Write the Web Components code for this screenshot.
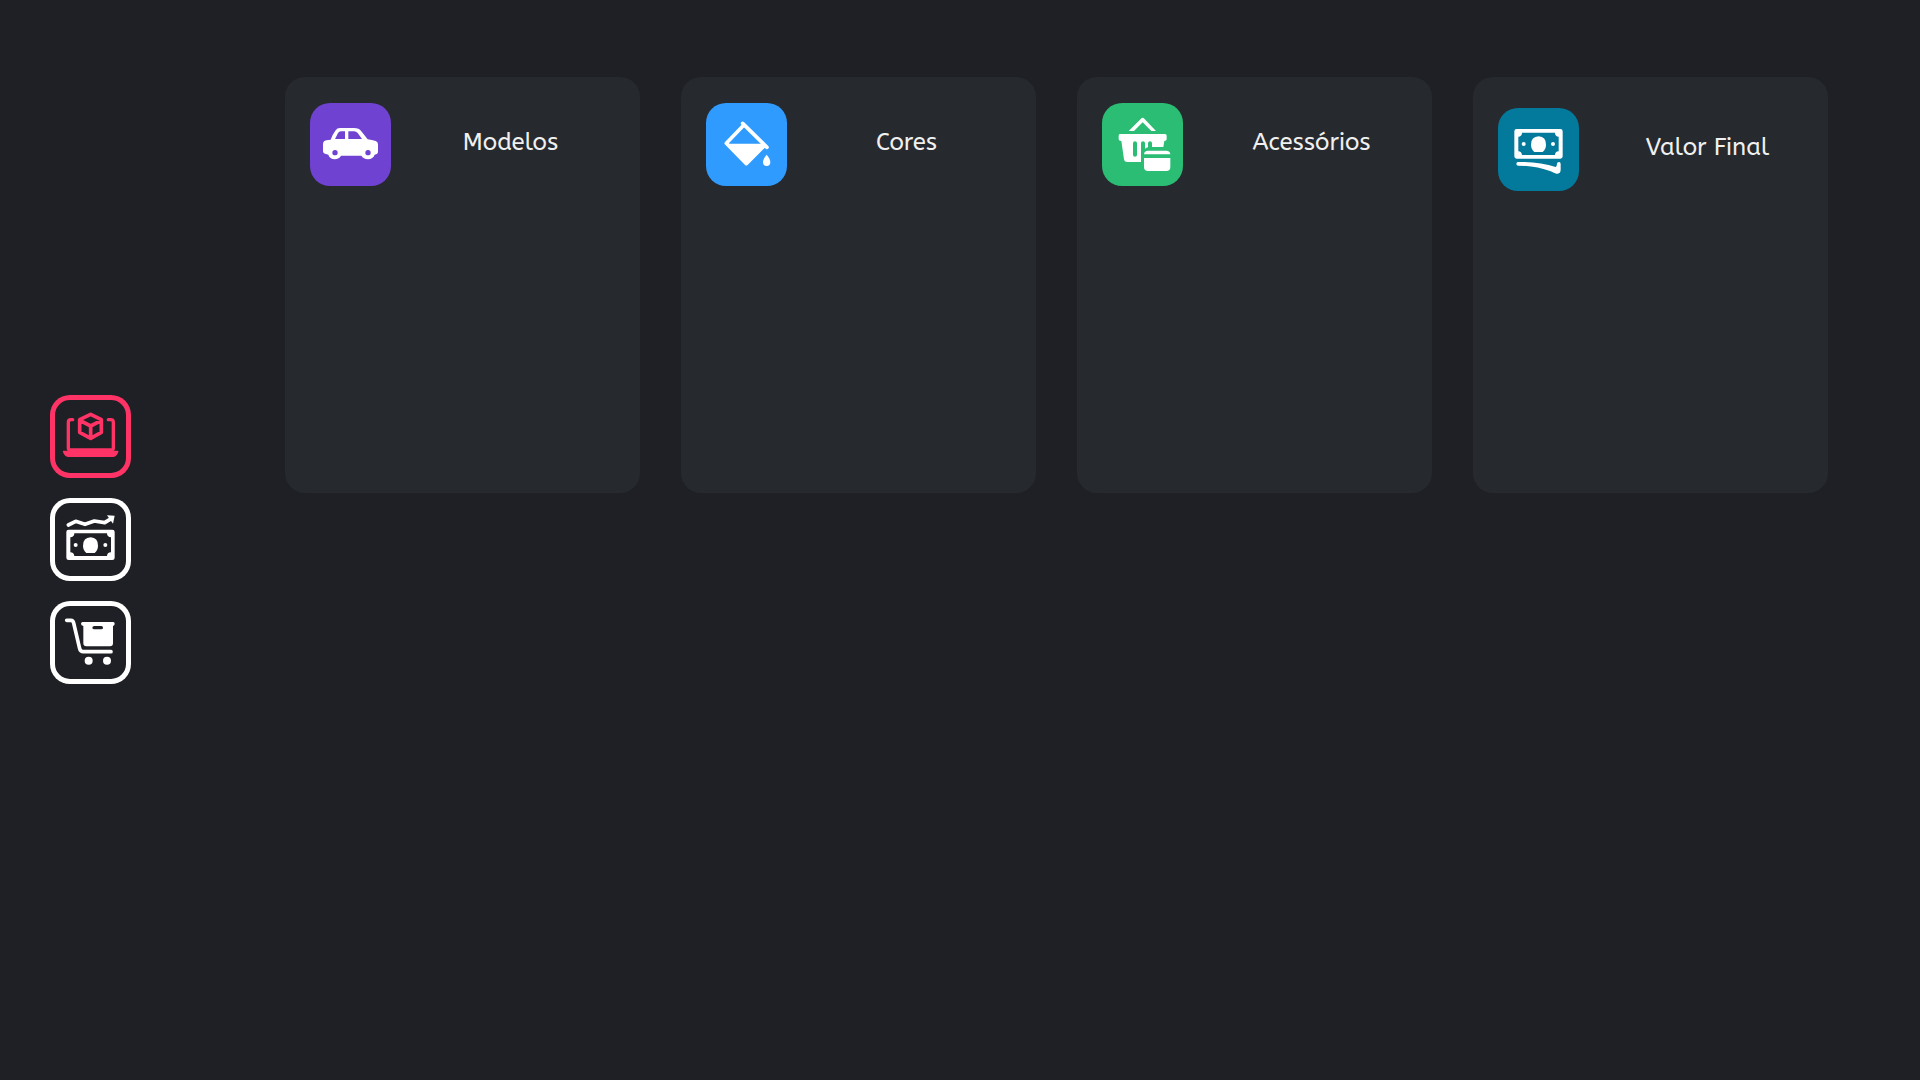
<!DOCTYPE html>
<html lang="pt-BR">
<head>
<meta charset="utf-8">
<title>Concessionária</title>
<style>
  html, body { margin: 0; }
  body {
    min-height: 100vh;
    background: #1f2025;
    color: #f0f0f0;
    font-family: "ABeeZee", "Open Sans", "Noto Sans", sans-serif;
  }
</style>
</head>
<body>
<app-shell>
  <side-nav slot="nav">
    <nav-button label="Modelos 3D" active>
      <svg viewBox="30 30 243 249">
        <g fill="none" stroke="currentColor" stroke-width="10" stroke-linecap="round" stroke-linejoin="round">
          <path d="M98 104h-5q-8 0-8 8v78q0 5 6 5h122q7 0 7-5v-78q0-8-8-8h-7" />
          <path stroke-width="11" d="M152 88l32 16v38l-32 18-33-18v-38zM121 107l31 16 31-16M152 123v36" />
        </g>
        <path fill="currentColor" d="M71 197h161q5 0 3 4-5 15-17 15H86q-12 0-17-15-2-4 2-4z" />
      </svg>
    </nav-button>
    <nav-button label="Vendas">
      <svg viewBox="30 24 243 249">
        <path fill="none" stroke="currentColor" stroke-width="11" stroke-linecap="round" stroke-linejoin="round" d="M85 105l22-11 28 9 28-10 31 5 16-10" />
        <path fill="currentColor" d="M201 76l23 1-5 24z" />
        <path fill="currentColor" fill-rule="evenodd" d="M86 119h131q7 0 7 7v77q0 7-7 7H86q-7 0-7-7v-77q0-7 7-7zm17 11q0 11-12 12v45q11 1 12 11h98q0-10 12-11v-45q-12-1-12-12z" />
        <path fill="currentColor" d="M139 189q-10-9-10-22 0-24 23-25 22 1 22 25 0 13-10 22z" />
        <circle fill="currentColor" cx="107" cy="165" r="6" />
        <circle fill="currentColor" cx="196" cy="165" r="6" />
      </svg>
    </nav-button>
    <nav-button label="Pedidos">
      <svg viewBox="30 27 243 249">
        <path fill="none" stroke="currentColor" stroke-width="11" stroke-linecap="round" stroke-linejoin="round" d="M80 85h13q6 0 8 8l18 77q2 9 11 9h83" />
        <path fill="currentColor" fill-rule="evenodd" d="M128 90h92q4 0 4 5t-5 7v52q0 9-9 9h-71q-9 0-9-9v-52q-7-1-7-7 0-5 5-5zm35 12q-6 0-6 5t6 5h21q5 0 5-5t-5-5z" />
        <circle fill="currentColor" cx="146" cy="206" r="12" />
        <circle fill="currentColor" cx="201" cy="206" r="12" />
      </svg>
    </nav-button>
  </side-nav>

  <option-card tone="violet">
    <svg slot="icon" viewBox="30 24 243 249">
      <path fill="currentColor" fill-rule="evenodd" d="M120 99h42q15 0 22 10l19 24q13 2 24 5 7 3 7 10v22q0 7-10 9-5 13-20 14-14-1-20-11h-61q-5 10-19 11-15-1-19-14-16-2-16-10v-21q0-10 10-12 7-2 13-2 6-16 15-28 4-7 13-7zm15 10h-12q-6 0-9 5l-9 18h30zm10 0v23h41l-13-18q-4-5-11-5z" />
      <circle cx="105" cy="173" r="8" fill="#6f42d2" />
      <circle cx="204" cy="173" r="8" fill="#6f42d2" />
    </svg>
    Modelos
  </option-card>

  <option-card tone="blue">
    <svg slot="icon" viewBox="27 24 243 249">
      <path fill="none" stroke="currentColor" stroke-width="11" stroke-linecap="round" stroke-linejoin="round" d="M137 85l73 72M140 91l-52 54 60 61 55-55" />
      <path fill="currentColor" d="M92 146h110l-54 60z" />
      <path fill="currentColor" d="M209 179q11 13 11 22 0 12-11 12t-11-12q0-9 11-22z" />
    </svg>
    Cores
  </option-card>

  <option-card tone="green" long>
    <svg slot="icon" viewBox="30 21 243 249">
      <path fill="currentColor" d="M110 105l37-37q5-5 10 0l35 37h-14l-26-26-26 26z" />
      <path fill="currentColor" fill-rule="evenodd" d="M84 114h135q5 0 5 5v11q0 5-7 5l-3 18h-34v-11q0-6-6-6t-6 6v12q-5 1-9 4v-16q0-6-6-6t-6 6v56h-41q-9 0-10-8l-8-55q-8 0-8-5v-11q0-5 4-5zm45 22q-6 0-6 6v34q0 6 6 6t6-6v-34q0-6-6-6z" />
      <path fill="currentColor" d="M168 164h55q11 0 12 11h-79q1-11 12-11zM156 186h79v27q0 12-12 12h-55q-12 0-12-12z" />
    </svg>
    Acessórios
  </option-card>

  <option-card tone="teal" long low>
    <svg slot="icon" viewBox="24 30 243 249">
      <path fill="currentColor" fill-rule="evenodd" d="M80 93h131q7 0 7 7v75q0 7-7 7H80q-7 0-7-7v-75q0-7 7-7zm16 11q0 11-11 12v44q10 1 11 11h99q0-10 11-11v-44q-11-1-11-12z" />
      <path fill="currentColor" d="M133 162q-10-9-10-22 0-24 23-25 22 1 22 25 0 13-10 22z" />
      <circle fill="currentColor" cx="101" cy="138" r="6" />
      <circle fill="currentColor" cx="189" cy="138" r="6" />
      <path fill="currentColor" d="M84 192q65-1 113 15 4-3 4-10 0-5 6-5 5 0 5 6v17q0 13-13 12-6-1-17-7-45-17-97-17-6 0-6-6 0-5 5-5z" />
    </svg>
    Valor Final
  </option-card>
</app-shell>

<script>
  function define(name, html) {
    const template = document.createElement("template");
    template.innerHTML = html;
    customElements.define(name, class extends HTMLElement {
      constructor() {
        super();
        this.attachShadow({ mode: "open" }).append(template.content.cloneNode(true));
      }
      connectedCallback() {
        const button = this.shadowRoot.querySelector("button");
        if (button) button.setAttribute("aria-label", this.getAttribute("label"));
      }
    });
  }

  define("app-shell", `
    <style>
      :host { display: flex; min-height: 100vh; }
      main {
        flex: 1;
        display: grid;
        grid-template-columns: repeat(4, minmax(0, 1fr));
        align-content: start;
        gap: 41px;
        padding: 77px 92px 77px 154px;
      }
    </style>
    <slot name="nav"></slot>
    <main><slot></slot></main>
  `);

  define("side-nav", `
    <style>
      :host { display: flex; padding: 0 0 2px 50px; }
      nav { display: flex; flex-direction: column; justify-content: center; gap: 20px; }
    </style>
    <nav><slot></slot></nav>
  `);

  define("nav-button", `
    <style>
      :host { display: block; color: #fff; }
      :host([active]) { color: #ff3366; }
      button {
        display: block;
        width: 81px;
        height: 83px;
        padding: 0;
        border: 0;
        border-radius: 20px;
        background: none;
        box-shadow: inset 0 0 0 5px currentColor;
        color: inherit;
        cursor: pointer;
      }
      ::slotted(svg) { display: block; width: 100%; height: 100%; }
    </style>
    <button type="button"><slot></slot></button>
  `);

  define("option-card", `
    <style>
      :host {
        display: block;
        box-sizing: border-box;
        min-height: 416px;
        padding: 26px 0 0 25px;
        border-radius: 20px;
        background: #26292e;
      }
      :host([low]) { padding-top: 31px; }
      :host([tone="violet"]) { --tone: #6f42d2; }
      :host([tone="blue"]) { --tone: #2f9bff; }
      :host([tone="green"]) { --tone: #2bbd74; }
      :host([tone="teal"]) { --tone: #03799c; }
      header { display: flex; align-items: center; }
      .tile {
        flex: none;
        width: 81px;
        height: 83px;
        border-radius: 20px;
        background: var(--tone);
        color: #fff;
      }
      h2 {
        flex: 1;
        margin: 0;
        padding: 0 10px 5px 0;
        font-size: 24px;
        font-weight: 400;
        line-height: 32px;
        text-align: center;
      }
      :host([long]) h2 { padding: 0 0 5px 8px; }
      ::slotted(svg) { display: block; width: 100%; height: 100%; }
    </style>
    <header>
      <div class="tile"><slot name="icon"></slot></div>
      <h2><slot></slot></h2>
    </header>
  `);
</script>
</body>
</html>
